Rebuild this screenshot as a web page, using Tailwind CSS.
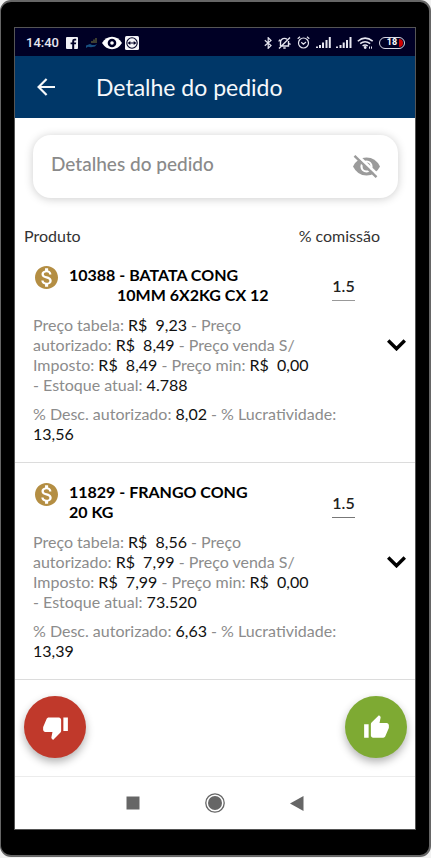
<!DOCTYPE html>
<html lang="pt-BR">
<head>
<meta charset="utf-8">
<meta name="viewport" content="width=device-width, initial-scale=1">
<title>Detalhe do pedido</title>
<script src="https://cdn.jsdelivr.net/npm/@tailwindcss/browser@4"></script>
</head>
<body class="flex min-h-screen flex-col bg-[#f2f2f2] pb-px font-['Lato','Open_Sans',sans-serif]">
<div class="flex flex-1 flex-col rounded-[11px] border-2 border-l-1 border-[#666] bg-black px-[13px] pt-[25px] pb-[25px]">
  <div class="flex flex-1 flex-col border border-[#555] bg-white">

    <div class="flex h-7 items-center justify-between bg-[#000025] pt-px pr-[10px] pl-[11px] text-[#e6e6f0]">
      <div class="flex items-center">
        <span class="mr-2 w-8 font-['Roboto',sans-serif] text-[13px] font-medium">14:40</span>
        <svg class="mr-2 size-3" viewBox="0 0 12 12" aria-hidden="true"><rect width="12" height="12" rx="1" fill="#f2f2f6"/><path d="M6.2 12V7.3H4.6V5.5h1.6V4.2C6.2 2.5 7.2 1.7 8.700 1.700H10.200V3.500H9.100C8.400 3.500 8.200 3.800 8.200 4.300V5.500H10.200L9.900 7.300H8.200V12Z" fill="#000025"/></svg>
        <svg class="mr-1 h-3 w-3" viewBox="0 0 12 12" fill="none" aria-hidden="true"><path d="M6 6V4M8 6V2.500M10 6V1" stroke="#7c7c3c"/><path d="M0 8.500L4 7l2 1h3l2-1-2 2.500-4 .8-3-.6L0 11Z" fill="#174f80"/></svg>
        <svg class="mr-[3px] h-[14px] w-5" viewBox="0 0 20 14" aria-hidden="true"><path d="M0 7Q4 .8 10 .8T20 7Q16 13.200 10 13.200T0 7Z" fill="#fff"/><circle cx="10" cy="7" r="4.300" fill="#000025"/><circle cx="10" cy="7" r="1.800" fill="#fff"/></svg>
        <svg class="size-[14px]" viewBox="0 0 14 14" aria-hidden="true"><rect width="14" height="14" rx="1.500" fill="#f4f4f8"/><circle cx="7" cy="7" r="5.200" fill="none" stroke="#000025" stroke-width="1.100"/><path d="M2.600 7l2.700-2v1.400h3.400V5l2.700 2-2.700 2V7.600H5.300V9Z" fill="#000025"/></svg>
      </div>
      <div class="flex items-center">
        <svg class="mr-[5px] h-3 w-[9px]" viewBox="0 0 9 12" fill="none" stroke="currentColor" stroke-width="1.200" aria-hidden="true"><path d="M.8 3.300L7 8.600 4.200 11.300V.7L7 3.400.8 8.700"/></svg>
        <svg class="mr-[6px] h-3 w-[13px]" viewBox="0 0 13 12" fill="none" stroke="currentColor" stroke-width="1.400" aria-hidden="true"><path d="M2.500 9V5.500C2.500 3 4.200 1.400 6.500 1.400c1 0 1.800.3 2.500.8M10.500 4v5H4M5.300 11h2.400M12 .6L1 11.400M.8 4.500L2 2.500M11.200 6.500l1.300 1"/></svg>
        <svg class="mr-[6px] size-[13px]" viewBox="0 0 13 13" fill="none" stroke="currentColor" stroke-width="1.200" aria-hidden="true"><circle cx="6.500" cy="7" r="5"/><path d="M.7 2.800L3 .8M12.300 2.800L10 .8M4.300 6.300L6.400 8.200 9 6"/></svg>
        <svg class="mr-[5px] h-[11px] w-[15px]" viewBox="0 0 15 11" stroke="currentColor" stroke-width="2" aria-hidden="true"><path d="M1 11V9.500M4 11V8M7 11V5.500M10.500 11V3M13.800 11V0"/></svg>
        <svg class="mr-[5px] h-[11px] w-[16px]" viewBox="0 0 16 11" stroke="currentColor" stroke-width="2" aria-hidden="true"><path d="M1 11V9.500M4.500 11V8M7.700 11V5.500M11 11V3M14.500 11V0"/></svg>
        <svg class="mr-[5px] h-3 w-[17px]" viewBox="0 0 17 12" fill="none" stroke="currentColor" stroke-width="1.500" aria-hidden="true"><path d="M.8 4.200Q8-2 15.700 4.200M3.200 6.600Q8 2.800 13.200 6.600M5.600 9Q8 7 10.800 9"/><circle cx="8.200" cy="10.500" r=".7"/><path d="M12.500 9.500v2.200M14.500 9.500v2.200" stroke-width="1"/></svg>
        <span class="relative flex h-3 w-[26px] items-center justify-center overflow-hidden rounded-full border border-[#d8d8e4] font-['Roboto',sans-serif] text-[9px] font-bold leading-none text-white">18<span class="absolute inset-y-px right-px w-1 rounded-r-full bg-[#d00000]"></span></span>
      </div>
    </div>

    <header class="flex h-[62px] items-center bg-[#003768] pl-[22px] text-[#f5f8fb]">
      <button type="button" aria-label="Voltar" class="mr-10"><svg class="h-[18px] w-[19px]" viewBox="0 0 19 18" fill="none" stroke="currentColor" stroke-width="2.200"><path d="M18 9H1.800M9.600 1L1.600 9l8 8"/></svg></button>
      <h1 class="text-[23px] leading-7">Detalhe do pedido</h1>
    </header>

    <main class="flex flex-1 flex-col">
      <div class="mt-[17px] mr-[17px] ml-[18px] flex h-[63px] items-center rounded-[18px] bg-white px-[18px] shadow-[0_1px_10px_rgba(0,0,0,0.2)]">
        <input type="text" aria-label="Detalhes do pedido" placeholder="Detalhes do pedido" class="min-w-0 flex-1 pb-1 text-[19px] font-medium outline-none placeholder:text-[#8a8a8a]">
        <button type="button" aria-label="Ocultar detalhes" class="text-[#9b9b9b]"><svg class="h-[23px] w-[27px]" viewBox="0 0 27 23" fill="none"><path d="M0 11.500Q4.500 2.500 13.500 2.500T27 11.500Q22.500 20.500 13.500 20.500T0 11.500Z" fill="currentColor"/><circle cx="13.500" cy="11.500" r="5" stroke="#fff" stroke-width="2.200"/><path d="M3.500-.5L26 21" stroke="#fff" stroke-width="3"/><path d="M1.500.8L23.500 22.200" stroke="currentColor" stroke-width="2.400"/></svg></button>
      </div>

      <div class="mt-7 flex justify-between pr-[35px] pl-[9px] text-[16px] leading-5 text-[#333]">
        <span>Produto</span><span>% comissão</span>
      </div>

      <article class="flex items-center border-b border-[#dcdcdc] pr-[9px] pb-[18px] pl-[18px]">
        <div class="min-w-0 flex-1 pt-[19px]">
          <div class="mb-[10px] flex">
            <svg class="mt-px mr-[11px] ml-[2px] size-[23px] shrink-0" viewBox="2 2 20 20" aria-hidden="true"><path fill="#b48e43" d="M12 2C6.480 2 2 6.480 2 12s4.480 10 10 10 10-4.480 10-10S17.520 2 12 2zm1.410 16.090V20h-2.670v-1.930c-1.710-.36-3.160-1.460-3.270-3.400h1.960c.1 1.050.82 1.870 2.650 1.870 1.960 0 2.400-.98 2.400-1.590 0-.83-.44-1.610-2.670-2.140-2.480-.6-4.180-1.620-4.180-3.670 0-1.720 1.390-2.840 3.110-3.210V4h2.670v1.950c1.860.45 2.790 1.860 2.850 3.390H14.300c-.05-1.110-.64-1.870-2.220-1.870-1.500 0-2.400.68-2.400 1.640 0 .84.65 1.390 2.670 1.910s4.180 1.390 4.180 3.910c-.01 1.830-1.380 2.830-3.120 3.160z"/></svg>
            <h2 class="flex-1 text-[16px] leading-5 font-bold text-black">10388 - BATATA CONG<span class="block pl-12">10MM 6X2KG CX 12</span></h2>
            <input type="text" value="1.5" aria-label="% comissão do produto 10388" class="mt-[9px] h-[27px] w-[23px] border-b border-[#999] pb-1 text-center text-[16px] font-semibold text-[#222] outline-none">
          </div>
          <p class="text-[16px] leading-5 text-[#8c8c8c]">Preço tabela: <b class="font-normal text-[#111]">R$&nbsp; 9,23</b> - Preço<br>autorizado: <b class="font-normal text-[#111]">R$&nbsp; 8,49</b> - Preço venda S/<br>Imposto: <b class="font-normal text-[#111]">R$&nbsp; 8,49</b> - Preço min: <b class="font-normal text-[#111]">R$&nbsp; 0,00</b><br>- Estoque atual: <b class="font-normal text-[#111]">4.788</b></p>
          <p class="mt-[9px] text-[16px] leading-5 text-[#8c8c8c]">% Desc. autorizado: <b class="font-normal text-[#111]">8,02</b> - % Lucratividade:<br><b class="font-normal text-[#111]">13,56</b></p>
        </div>
        <button type="button" aria-label="Expandir produto 10388" class="ml-8 text-black"><svg class="h-3 w-[19px]" viewBox="0 0 19 12" fill="none" stroke="currentColor" stroke-width="3.500"><path d="M1.200 1.500L9.500 9.700l8.300-8.200"/></svg></button>
      </article>

      <article class="flex items-center border-b border-[#dcdcdc] pr-[9px] pb-[18px] pl-[18px]">
        <div class="min-w-0 flex-1 pt-[19px]">
          <div class="mb-[10px] flex">
            <svg class="mt-px mr-[11px] ml-[2px] size-[23px] shrink-0" viewBox="2 2 20 20" aria-hidden="true"><path fill="#b48e43" d="M12 2C6.480 2 2 6.480 2 12s4.480 10 10 10 10-4.480 10-10S17.520 2 12 2zm1.410 16.090V20h-2.670v-1.930c-1.710-.36-3.160-1.460-3.270-3.400h1.960c.1 1.050.82 1.870 2.650 1.870 1.960 0 2.400-.98 2.400-1.590 0-.83-.44-1.610-2.670-2.140-2.480-.6-4.180-1.620-4.180-3.670 0-1.720 1.390-2.840 3.110-3.210V4h2.670v1.950c1.860.45 2.790 1.860 2.850 3.390H14.300c-.05-1.110-.64-1.870-2.220-1.870-1.500 0-2.400.68-2.400 1.640 0 .84.65 1.390 2.670 1.910s4.180 1.390 4.180 3.910c-.01 1.830-1.380 2.830-3.120 3.160z"/></svg>
            <h2 class="flex-1 text-[16px] leading-5 font-bold text-black">11829 - FRANGO CONG<span class="block">20 KG</span></h2>
            <input type="text" value="1.5" aria-label="% comissão do produto 11829" class="mt-[9px] h-[27px] w-[23px] border-b border-[#777] pb-1 text-center text-[16px] font-semibold text-[#222] outline-none">
          </div>
          <p class="text-[16px] leading-5 text-[#8c8c8c]">Preço tabela: <b class="font-normal text-[#111]">R$&nbsp; 8,56</b> - Preço<br>autorizado: <b class="font-normal text-[#111]">R$&nbsp; 7,99</b> - Preço venda S/<br>Imposto: <b class="font-normal text-[#111]">R$&nbsp; 7,99</b> - Preço min: <b class="font-normal text-[#111]">R$&nbsp; 0,00</b><br>- Estoque atual: <b class="font-normal text-[#111]">73.520</b></p>
          <p class="mt-[9px] text-[16px] leading-5 text-[#8c8c8c]">% Desc. autorizado: <b class="font-normal text-[#111]">6,63</b> - % Lucratividade:<br><b class="font-normal text-[#111]">13,39</b></p>
        </div>
        <button type="button" aria-label="Expandir produto 11829" class="ml-8 text-black"><svg class="h-3 w-[19px]" viewBox="0 0 19 12" fill="none" stroke="currentColor" stroke-width="3.500"><path d="M1.200 1.500L9.500 9.700l8.300-8.200"/></svg></button>
      </article>

      <div class="flex justify-between pt-4 pr-2 pl-[9px]">
        <button type="button" aria-label="Reprovar" class="flex size-[62px] items-center justify-center rounded-full bg-[#c0392b] text-white shadow-[0_4px_8px_rgba(0,0,0,0.3)]"><svg class="size-[27px]" viewBox="0 0 24 24" fill="currentColor"><path d="M15 3H6c-.83 0-1.540.5-1.840 1.220l-3.020 7.050c-.09.23-.14.47-.14.730v2c0 1.100.9 2 2 2h6.310l-.95 4.570-.03.320c0 .41.17.79.44 1.060L9.830 23l6.590-6.590c.36-.36.58-.86.58-1.410V5c0-1.100-.9-2-2-2zm4 0v12h4V3h-4z"/></svg></button>
        <button type="button" aria-label="Aprovar" class="flex size-[62px] items-center justify-center rounded-full bg-[#7eaa33] text-white shadow-[0_4px_8px_rgba(0,0,0,0.3)]"><svg class="size-[27px]" viewBox="0 0 24 24" fill="currentColor"><path d="M1 21h4V9H1v12zm22-11c0-1.100-.9-2-2-2h-6.310l.95-4.570.03-.32c0-.41-.17-.79-.44-1.060L14.170 1 7.590 7.590C7.220 7.950 7 8.450 7 9v10c0 1.100.9 2 2 2h9c.83 0 1.540-.5 1.840-1.220l3.020-7.050c.09-.23.14-.47.14-.730v-2z"/></svg></button>
      </div>
    </main>

    <nav class="flex h-[53px] items-center justify-center gap-[65px] border-t border-[#ececec] text-[#666]">
      <button type="button" aria-label="Recentes"><svg class="size-[14px]" viewBox="0 0 14 14"><path d="M.5.5h13v13H.5Z" fill="currentColor"/></svg></button>
      <button type="button" aria-label="Início"><svg class="size-5" viewBox="0 0 20 20"><circle cx="10" cy="10" r="9.200" fill="none" stroke="currentColor" stroke-width="1.300"/><circle cx="10" cy="10" r="7" fill="currentColor"/></svg></button>
      <button type="button" aria-label="Voltar ao app anterior"><svg class="h-[15px] w-[14px]" viewBox="0 0 14 15"><path d="M0 7.500L13.500 0v15Z" fill="currentColor"/></svg></button>
    </nav>
  </div>
</div>
</body>
</html>
